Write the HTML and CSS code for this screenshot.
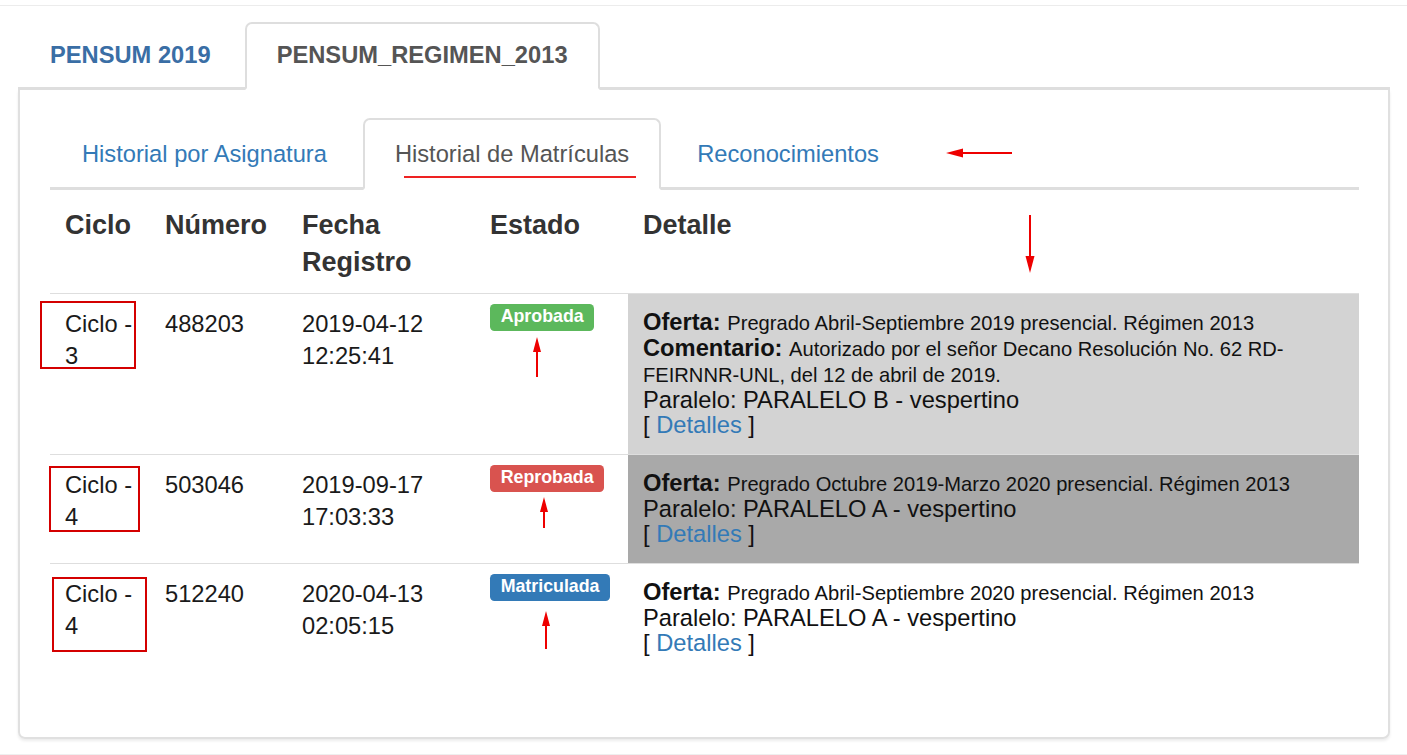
FILE: index.html
```html
<!DOCTYPE html>
<html lang="es">
<head>
<meta charset="utf-8">
<title>Historial de Matrículas</title>
<link rel="stylesheet" href="styles.css">
</head>
<body>
<div class="topline"></div>
<div class="page">
  <ul class="tabs tabs-main">
    <li><a class="tab-link" href="#">PENSUM 2019</a></li>
    <li class="active"><a class="tab-link" href="#">PENSUM_REGIMEN_2013</a></li>
  </ul>
  <div class="panel">
    <ul class="tabs tabs-sub">
      <li><a class="tab-link" href="#">Historial por Asignatura</a></li>
      <li class="active"><a class="tab-link" href="#">Historial de Matrículas<span class="mark-underline"></span></a></li>
      <li><a class="tab-link" href="#">Reconocimientos</a></li>
    </ul>
    <svg class="arrow-left" width="66" height="12" viewBox="0 0 66 12"><line x1="14" y1="6" x2="66" y2="6" stroke="#e00" stroke-width="2"/><polygon points="0,6 17,1.5 17,10.5" fill="#e00"/></svg>
    <svg class="arrow-down" width="12" height="58" viewBox="0 0 12 58"><line x1="6" y1="0" x2="6" y2="44" stroke="#e00" stroke-width="2"/><polygon points="6,58 1.5,41 10.5,41" fill="#e00"/></svg>
    <table class="records">
      <colgroup>
        <col class="c-ciclo">
        <col class="c-num">
        <col class="c-fecha">
        <col class="c-estado">
        <col>
      </colgroup>
      <thead>
        <tr>
          <th>Ciclo</th>
          <th>Número</th>
          <th>Fecha Registro</th>
          <th>Estado</th>
          <th>Detalle</th>
        </tr>
      </thead>
      <tbody>
        <tr>
          <td class="ciclo">Ciclo - 3<span class="mark-box b1"></span></td>
          <td>488203</td>
          <td>2019-04-12 12:25:41</td>
          <td class="estado"><span class="label label-success">Aprobada</span><svg class="arrow-up a1" width="10" height="40" viewBox="0 0 10 40"><line x1="5" y1="12" x2="5" y2="40" stroke="#e00" stroke-width="2"/><polygon points="5,0 1,15 9,15" fill="#e00"/></svg></td>
          <td class="detalle bg-light">
            <div><b>Oferta:</b> <small>Pregrado Abril-Septiembre 2019 presencial. Régimen 2013</small></div>
            <div><b>Comentario:</b> <small>Autorizado por el señor Decano Resolución No. 62 RD-FEIRNNR-UNL, del 12 de abril de 2019.</small></div>
            <div>Paralelo: PARALELO B - vespertino</div>
            <div>[ <a href="#">Detalles</a> ]</div>
          </td>
        </tr>
        <tr>
          <td class="ciclo">Ciclo - 4<span class="mark-box b2"></span></td>
          <td>503046</td>
          <td>2019-09-17 17:03:33</td>
          <td class="estado"><span class="label label-danger">Reprobada</span><svg class="arrow-up a2" width="10" height="31" viewBox="0 0 10 31"><line x1="5" y1="12" x2="5" y2="31" stroke="#e00" stroke-width="2"/><polygon points="5,0 1,15 9,15" fill="#e00"/></svg></td>
          <td class="detalle bg-dark">
            <div><b>Oferta:</b> <small>Pregrado Octubre 2019-Marzo 2020 presencial. Régimen 2013</small></div>
            <div>Paralelo: PARALELO A - vespertino</div>
            <div>[ <a href="#">Detalles</a> ]</div>
          </td>
        </tr>
        <tr>
          <td class="ciclo">Ciclo - 4<span class="mark-box b3"></span></td>
          <td>512240</td>
          <td>2020-04-13 02:05:15</td>
          <td class="estado"><span class="label label-primary">Matriculada</span><svg class="arrow-up a3" width="10" height="38" viewBox="0 0 10 38"><line x1="5" y1="12" x2="5" y2="38" stroke="#e00" stroke-width="2"/><polygon points="5,0 1,15 9,15" fill="#e00"/></svg></td>
          <td class="detalle">
            <div><b>Oferta:</b> <small>Pregrado Abril-Septiembre 2020 presencial. Régimen 2013</small></div>
            <div>Paralelo: PARALELO A - vespertino</div>
            <div>[ <a href="#">Detalles</a> ]</div>
          </td>
        </tr>
      </tbody>
    </table>
  </div>
</div>
<div class="bottomband"></div>
</body>
</html>
```

FILE: styles.css
```css
html, body {
  margin: 0;
  padding: 0;
  background: #fff;
  font-family: "Liberation Sans", Arial, sans-serif;
  color: #333;
  overflow: hidden;
}

.topline {
  margin-top: 5px;
  height: 1px;
  background: #ececec;
}

.page {
  padding: 16px 17px 0 18px;
}

/* ---------- tabs ---------- */
.tabs {
  list-style: none;
  margin: 0;
  padding: 0;
  display: flex;
  gap: 4px;
  border-bottom: 3px solid #dedede;
}

.tabs-main {
  gap: 2px;
}

.tabs li {
  margin-bottom: -3px;
}

.tab-link {
  display: block;
  position: relative;
  border: 2px solid transparent;
  border-radius: 7px 7px 0 0;
  text-decoration: none;
  color: #337ab7;
}

.tabs .active .tab-link {
  background: #fff;
  border-color: #dedede;
  border-bottom-color: transparent;
  color: #555;
}

.tabs-main .tab-link {
  font-size: 23.7px;
  font-weight: bold;
  line-height: 32px;
  padding: 15px 30px 17px;
}

.tabs-main li:first-child .tab-link {
  color: #3a6ea5;
}

.tabs-sub .tab-link {
  font-size: 23.7px;
  line-height: 34px;
  padding: 17px 30px 17px;
}

.mark-underline {
  position: absolute;
  left: 39px;
  top: 56px;
  width: 232px;
  height: 2px;
  background: #e22;
}

/* ---------- panel ---------- */
.panel {
  position: relative;
  border: 2px solid #e0e0e0;
  border-top: 0;
  border-radius: 0 0 7px 7px;
  padding: 28px 29px 65px 30px;
  box-shadow: 0 2px 3px rgba(0, 0, 0, 0.08);
}

.arrow-left {
  position: absolute;
  left: 926px;
  top: 57px;
}

.arrow-down {
  position: absolute;
  left: 1004px;
  top: 125px;
}

/* ---------- table ---------- */
.records {
  width: 100%;
  table-layout: fixed;
  border-collapse: collapse;
}

.c-ciclo { width: 100px; }
.c-num { width: 137px; }
.c-fecha { width: 188px; }
.c-estado { width: 153px; }

.records th {
  text-align: left;
  vertical-align: top;
  font-size: 27px;
  line-height: 37px;
  font-weight: bold;
  color: #333;
  padding: 17px 15px 12px;
  border-bottom: 1px solid #dedede;
}

.records td {
  vertical-align: top;
  font-size: 23.7px;
  line-height: 32px;
  color: #1a1a1a;
  padding: 14px 15px 15px;
  border-top: 1px solid #dedede;
}

.records td.ciclo {
  position: relative;
}

.mark-box {
  position: absolute;
  border: 2px solid #d40000;
  box-sizing: border-box;
}

.b1 { left: -10px; top: 7px; width: 96px; height: 68px; }
.b2 { left: -1px; top: 11px; width: 91px; height: 66px; }
.b3 { left: 2px; top: 13px; width: 95px; height: 75px; }

.records td.estado {
  padding-top: 10px;
}

.label {
  display: inline-block;
  vertical-align: top;
  font-size: 17.8px;
  font-weight: bold;
  line-height: 1;
  color: #fff;
  padding: 0.2em 0.6em 0.3em;
  border-radius: 0.25em;
  white-space: nowrap;
}

.label-success { background: #5cb85c; }
.label-danger { background: #d9534f; }
.label-primary { background: #337ab7; }

.arrow-up {
  display: block;
}

.a1 { margin-left: 42px; margin-top: 1px; }
.a2 { margin-left: 49px; }
.a3 { margin-left: 51px; margin-top: 5px; }

.records td.detalle {
  line-height: 25px;
  color: #111;
  padding: 16px 15px 16px;
}

.detalle b {
  font-weight: bold;
  color: #111;
}

.detalle small {
  font-size: 85%;
}

.detalle a {
  color: #337ab7;
  text-decoration: none;
}

.bg-light { background: #d3d3d3; }
.bg-dark { background: #a9a9a9; }

.bottomband {
  margin-top: 15px;
  height: 10px;
  background: #efefef;
}
```
